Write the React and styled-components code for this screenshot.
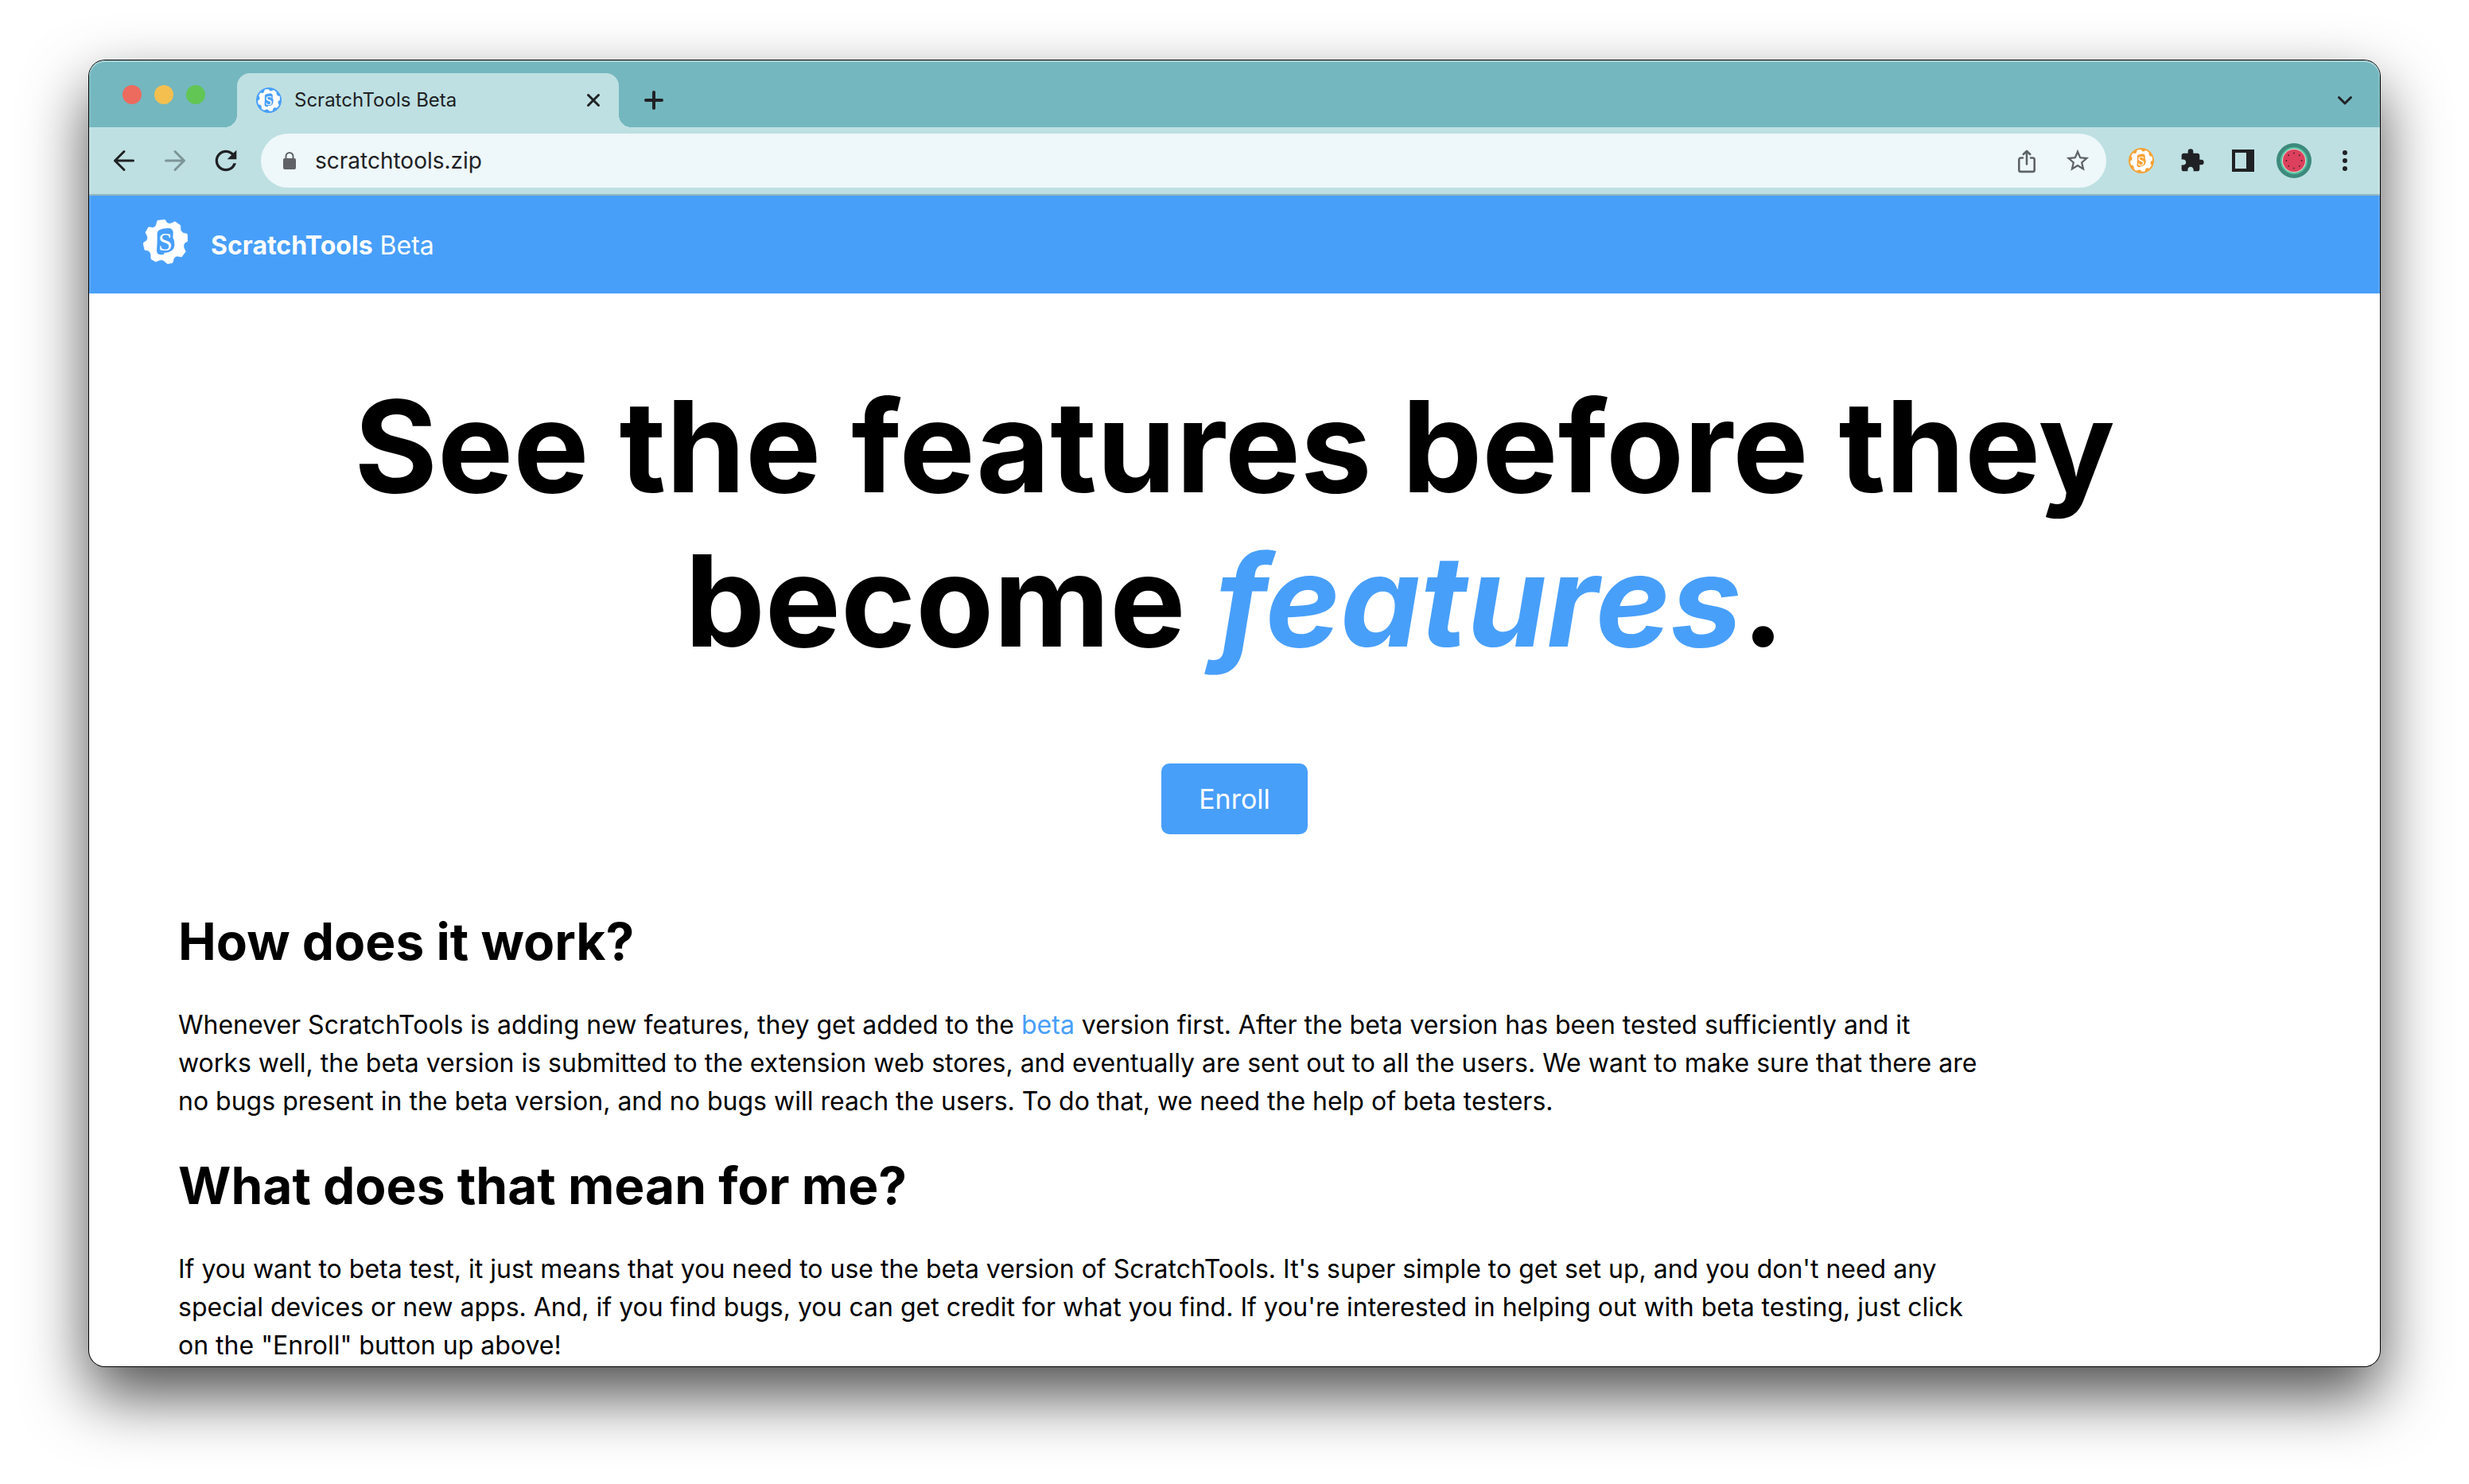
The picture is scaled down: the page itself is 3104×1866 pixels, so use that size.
import React from "react";
import styled, { createGlobalStyle } from "styled-components";
import { MdExtension, MdRefresh, MdStarBorder } from "react-icons/md";

const colors = {
  strip: "#74b7bf",
  toolbar: "#bee0e2",
  omnibox: "#eef7f9",
  brand: "#489ffa",
  ink: "#202124",
  muted: "#5f6368",
};

const GlobalStyle = createGlobalStyle`
  *, *::before, *::after {
    box-sizing: border-box;
  }
  body {
    margin: 0;
    background: #fff;
    color: #000;
    font-family: Inter, "Liberation Sans", sans-serif;
  }
`;

const Desktop = styled.div`
  display: flex;
  min-height: 100vh;
  padding: 76px 112px 148px;
`;

const Window = styled.div`
  position: relative;
  display: flex;
  flex: 1;
  flex-direction: column;
  min-width: 0;
  overflow: hidden;
  border-radius: 20px;
  background: #fff;
  box-shadow: 0 0 0 1px #000, 0 36px 80px rgba(0, 0, 0, 0.7);

  &::after {
    content: "";
    position: absolute;
    inset: 0;
    border-radius: 20px;
    box-shadow: inset 0 2px 0 rgba(255, 255, 255, 0.3),
      inset 0 0 0 2px rgba(255, 255, 255, 0.1);
    pointer-events: none;
  }
`;

const TabStrip = styled.div`
  display: flex;
  align-items: flex-end;
  height: 84px;
  padding: 0 12px 0 42px;
  background: ${colors.strip};
`;

const Lights = styled.div`
  display: flex;
  flex: none;
  gap: 16px;
  width: 144px;
  padding-bottom: 29px;
`;

const Light = styled.button`
  width: 24px;
  height: 24px;
  padding: 0;
  border: 0;
  border-radius: 50%;
  background: ${(p) => p.$color};
`;

const Tab = styled.div`
  position: relative;
  display: flex;
  align-items: center;
  width: 480px;
  height: 68px;
  padding: 0 8px 0 24px;
  border-radius: 16px 16px 0 0;
  background: ${colors.toolbar};

  &::before,
  &::after {
    content: "";
    position: absolute;
    bottom: 0;
    width: 16px;
    height: 16px;
  }
  &::before {
    right: 100%;
    background: radial-gradient(circle at 0 0, transparent 16px, ${colors.toolbar} 16px);
  }
  &::after {
    left: 100%;
    background: radial-gradient(circle at 100% 0, transparent 16px, ${colors.toolbar} 16px);
  }
`;

const TabTitle = styled.span`
  flex: 1;
  padding-left: 16px;
  color: ${colors.ink};
  font-size: 24px;
  line-height: 32px;
`;

const IconButton = styled.button`
  display: flex;
  flex: none;
  align-items: center;
  justify-content: center;
  width: ${(p) => p.$width || 64}px;
  height: 68px;
  padding: 0;
  border: 0;
  background: none;
  color: ${(p) => p.$color || colors.ink};
`;

const NewTab = styled(IconButton)`
  margin: 0 auto 0 12px;
`;

const Toolbar = styled.div`
  display: flex;
  align-items: center;
  height: 86px;
  padding: 8px 12px;
  border-bottom: 2px solid #94b6bd;
  background: ${colors.toolbar};
`;

const Omnibox = styled.label`
  display: flex;
  flex: 1;
  align-items: center;
  min-width: 0;
  height: 68px;
  margin: 0 12px;
  padding: 0 4px 0 20px;
  border-radius: 34px;
  background: ${colors.omnibox};
  color: ${colors.muted};
`;

const Address = styled.input`
  flex: 1;
  min-width: 0;
  padding: 0;
  margin-left: 16px;
  border: 0;
  outline: 0;
  background: none;
  color: ${colors.ink};
  font-family: inherit;
  font-size: 28px;
  line-height: 36px;
`;

const SiteHeader = styled.header`
  display: flex;
  align-items: flex-start;
  gap: 29px;
  padding: 30px 68px 28px;
  background: ${colors.brand};
  color: #fff;
`;

const SiteName = styled.span`
  font-size: 32px;
  line-height: 65px;
`;

const Main = styled.main`
  padding: 95px 112px 0;
`;

const Hero = styled.section`
  display: flex;
  flex-direction: column;
  align-items: center;
  gap: 108px;
  margin-bottom: 96px;
`;

const Headline = styled.h1`
  margin: 0;
  font-size: 160px;
  font-weight: 700;
  line-height: 194px;
  text-align: center;
`;

const Accent = styled.em`
  color: ${colors.brand};
`;

const EnrollButton = styled.button`
  padding: 22px 47px;
  border: 0;
  border-radius: 10px;
  background: ${colors.brand};
  color: #fff;
  font-family: inherit;
  font-size: 34px;
  line-height: 45px;
`;

const Section = styled.section`
  max-width: 2270px;

  & + & {
    margin-top: 43px;
  }
`;

const Heading = styled.h2`
  margin: 0 0 43px;
  font-size: 64px;
  font-weight: 700;
  line-height: 77px;
`;

const Paragraph = styled.p`
  margin: 0;
  font-size: 32px;
  line-height: 48px;
`;

const TextLink = styled.a`
  color: ${colors.brand};
  text-decoration: none;
`;

function Gear({ size, fill, ink }) {
  return (
    <svg width={size} height={size} viewBox="30 33 168 168" aria-hidden="true">
      <path
        fill={fill}
        stroke={fill}
        strokeWidth="2"
        strokeLinejoin="round"
        d="M84 37L112 34L120 46Q127 50 134 48L150 41L170 55L171 72Q174 80 181 84L196 88L198 114L185 123Q181 130 183 139L190 154L175 174L158 171Q149 172 145 181L141 196L122 200L106 187Q98 183 91 187L77 192L60 182L59 164Q55 152 48 150L36 148L30 122L44 112Q48 105 46 97L39 82L50 62L68 64Q77 62 79 53Z"
      />
      <path
        fill={ink}
        d="M83 86Q84 75 93 72Q103 66 115 67Q122 63 133 67Q145 73 143 87L142 101Q149 111 148 125Q149 141 137 151Q125 160 110 158Q109 166 101 166L91 165Q81 162 81 150L83 116Z"
      />
      <text
        x="114"
        y="150"
        textAnchor="middle"
        fontFamily="Liberation Serif, serif"
        fontSize="96"
        fill={fill}
      >
        S
      </text>
    </svg>
  );
}

function GearBadge({ color }) {
  return (
    <svg width="32" height="32" viewBox="0 0 32 32" aria-hidden="true">
      <circle cx="16" cy="16" r="16" fill={color} />
      <svg x="2" y="2" width="28" height="28">
        <Gear size={28} fill="#fff" ink={color} />
      </svg>
    </svg>
  );
}

function Stroke({ size = 32, width = 3, children }) {
  return (
    <svg
      width={size}
      height={size}
      viewBox="0 0 32 32"
      fill="none"
      stroke="currentColor"
      strokeWidth={width}
      strokeLinecap="round"
      strokeLinejoin="round"
      aria-hidden="true"
    >
      {children}
    </svg>
  );
}

function Lock() {
  return (
    <svg width="32" height="32" viewBox="0 0 32 32" aria-hidden="true">
      <path d="M11.500 14V10.500a4.500 4.500 0 0 1 9 0V14" fill="none" stroke="currentColor" strokeWidth="2" />
      <rect x="8" y="13" width="16" height="14" rx="2" fill="currentColor" />
    </svg>
  );
}

function Watermelon() {
  const seeds = Array.from({ length: 8 }, (_, i) => (i * Math.PI) / 4);
  return (
    <svg width="44" height="44" viewBox="0 0 44 44" aria-hidden="true">
      <circle cx="22" cy="22" r="22" fill="#3d8a7c" />
      <circle cx="22" cy="22" r="17" fill="#57c4a3" />
      <circle cx="22" cy="22" r="15" fill="#e9d3cd" />
      <circle cx="22" cy="22" r="14" fill="#dc405c" />
      {seeds.map((a) => (
        <circle key={a} cx={22 + 9.6 * Math.cos(a)} cy={22 + 9.6 * Math.sin(a)} r="0.9" fill="#3a1f2b" />
      ))}
    </svg>
  );
}

function Chrome() {
  return (
    <>
      <TabStrip>
        <Lights>
          <Light $color="#ed6a5f" aria-label="Close window" />
          <Light $color="#f5bf4f" aria-label="Minimize window" />
          <Light $color="#62c655" aria-label="Zoom window" />
        </Lights>
        <Tab>
          <GearBadge color="#489ffa" />
          <TabTitle>ScratchTools Beta</TabTitle>
          <IconButton $width={48} aria-label="Close tab">
            <Stroke>
              <path d="M9.500 9.500l13 13M22.500 9.500l-13 13" />
            </Stroke>
          </IconButton>
        </Tab>
        <NewTab aria-label="New tab">
          <Stroke width={4}>
            <path d="M16 6v20M6 16h20" />
          </Stroke>
        </NewTab>
        <IconButton aria-label="Search tabs">
          <Stroke>
            <path d="M8.500 12.500l7.500 7.500 7.500-7.500" />
          </Stroke>
        </IconButton>
      </TabStrip>
      <Toolbar>
        <IconButton aria-label="Back">
          <Stroke>
            <path d="M27.500 16H4.500M16 4.500L4.500 16L16 27.500" />
          </Stroke>
        </IconButton>
        <IconButton $color="#7d9497" aria-label="Forward">
          <Stroke>
            <path d="M4.500 16h23M16 4.500L27.500 16L16 27.500" />
          </Stroke>
        </IconButton>
        <IconButton aria-label="Reload">
          <MdRefresh size={40} />
        </IconButton>
        <Omnibox>
          <Lock />
          <Address aria-label="Address" defaultValue="scratchtools.zip" />
          <IconButton $color={colors.muted} aria-label="Share">
            <Stroke width={2.6}>
              <path d="M11 12.500H8.500a2.200 2.200 0 0 0-2.200 2.200v13a2.200 2.200 0 0 0 2.200 2.200h15a2.200 2.200 0 0 0 2.200-2.200v-13a2.200 2.200 0 0 0-2.200-2.200H21M16 20.500V4.500M11.800 8l4.200-4.200L20.200 8" />
            </Stroke>
          </IconButton>
          <IconButton $color={colors.muted} aria-label="Bookmark this tab">
            <MdStarBorder size={34} />
          </IconButton>
        </Omnibox>
        <IconButton aria-label="ScratchTools extension">
          <GearBadge color="#f5a236" />
        </IconButton>
        <IconButton aria-label="Extensions">
          <MdExtension size={32} />
        </IconButton>
        <IconButton aria-label="Side panel">
          <svg width="28" height="28" viewBox="0 0 28 28" fill="currentColor" aria-hidden="true">
            <path fillRule="evenodd" d="M0 0h28v28H0zM4 4v20h14V4z" />
          </svg>
        </IconButton>
        <IconButton aria-label="Profile">
          <Watermelon />
        </IconButton>
        <IconButton aria-label="Menu">
          <svg width="32" height="32" viewBox="0 0 32 32" fill="currentColor" aria-hidden="true">
            <circle cx="16" cy="6" r="3" />
            <circle cx="16" cy="16" r="3" />
            <circle cx="16" cy="26" r="3" />
          </svg>
        </IconButton>
      </Toolbar>
    </>
  );
}

export default function App() {
  return (
    <Desktop>
      <GlobalStyle />
      <Window>
        <Chrome />
        <SiteHeader>
          <Gear size={56} fill="#fff" ink={colors.brand} />
          <SiteName>
            <b>ScratchTools</b> Beta
          </SiteName>
        </SiteHeader>
        <Main>
          <Hero>
            <Headline>
              See the features before they become <Accent>features</Accent>.
            </Headline>
            <EnrollButton>Enroll</EnrollButton>
          </Hero>
          <Section>
            <Heading>How does it work?</Heading>
            <Paragraph>
              Whenever ScratchTools is adding new features, they get added to the{" "}
              <TextLink href="#beta">beta</TextLink> version first. After the beta version has been
              tested sufficiently and it works well, the beta version is submitted to the extension
              web stores, and eventually are sent out to all the users. We want to make sure that
              there are no bugs present in the beta version, and no bugs will reach the users. To do
              that, we need the help of beta testers.
            </Paragraph>
          </Section>
          <Section>
            <Heading>What does that mean for me?</Heading>
            <Paragraph>
              If you want to beta test, it just means that you need to use the beta version of
              ScratchTools. It's super simple to get set up, and you don't need any special devices
              or new apps. And, if you find bugs, you can get credit for what you find. If you're
              interested in helping out with beta testing, just click on the "Enroll" button up
              above!
            </Paragraph>
          </Section>
        </Main>
      </Window>
    </Desktop>
  );
}
